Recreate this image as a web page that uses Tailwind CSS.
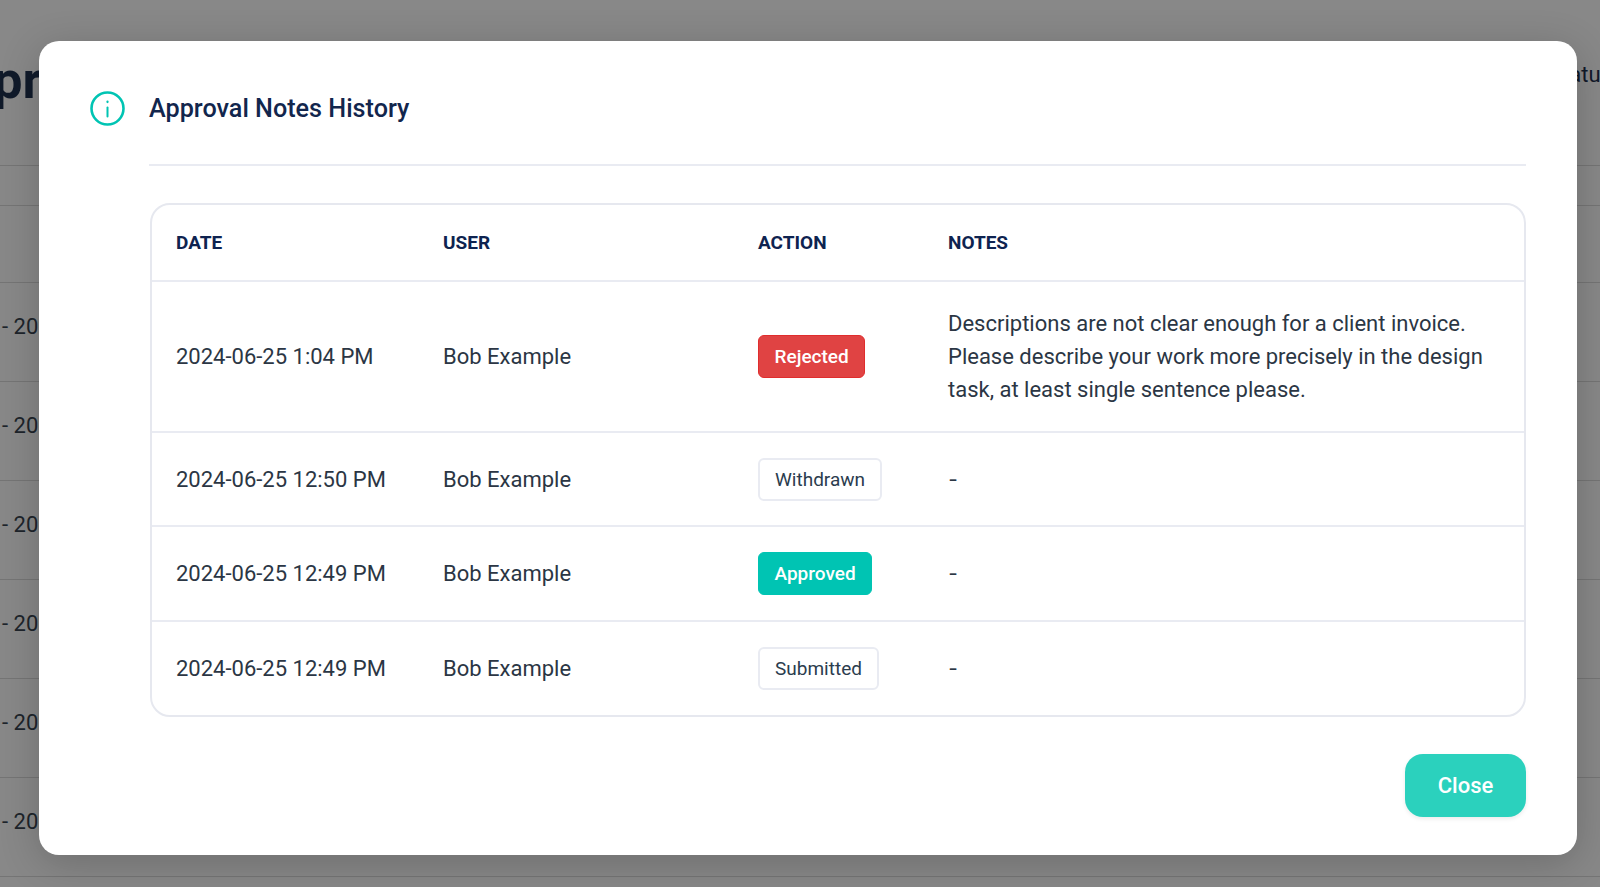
<!DOCTYPE html>
<html lang="en">
<head>
    <meta charset="UTF-8">
    <title>Approval Notes History</title>
    <script src="https://cdn.jsdelivr.net/npm/@tailwindcss/browser@4"></script>
</head>
<body>
    <div class="relative h-[887px] w-[1600px] overflow-hidden bg-white font-['Roboto',sans-serif] text-[#2b3644]">
        <!-- page behind the modal -->
        <div class="flex flex-col">
            <div class="flex h-[166px] items-center justify-between border-b border-[#d8d8d8]">
                <p class="ml-[-70px] mt-[-4px] text-[52px] leading-none font-bold text-[#0f2342]">Appr</p>
                <p class="mr-[-12px] mt-[-16px] text-[22px] text-[#0f2342]">Status</p>
            </div>
            <div class="h-[40px] border-b border-[#d8d8d8]"></div>
            <div class="h-[77px] border-b border-[#d8d8d8]"></div>
            <div class="flex h-[99px] items-center border-b border-[#d8d8d8] pb-[11px] text-[22px]"><span class="ml-[2px] whitespace-nowrap">- 2024</span></div>
            <div class="flex h-[99px] items-center border-b border-[#d8d8d8] pb-[11px] text-[22px]"><span class="ml-[2px] whitespace-nowrap">- 2024</span></div>
            <div class="flex h-[99px] items-center border-b border-[#d8d8d8] pb-[11px] text-[22px]"><span class="ml-[2px] whitespace-nowrap">- 2024</span></div>
            <div class="flex h-[99px] items-center border-b border-[#d8d8d8] pb-[11px] text-[22px]"><span class="ml-[2px] whitespace-nowrap">- 2024</span></div>
            <div class="flex h-[99px] items-center border-b border-[#d8d8d8] pb-[11px] text-[22px]"><span class="ml-[2px] whitespace-nowrap">- 2024</span></div>
            <div class="flex h-[99px] items-center border-b border-[#d8d8d8] pb-[11px] text-[22px]"><span class="ml-[2px] whitespace-nowrap">- 2024</span></div>
        </div>

        <!-- backdrop -->
        <div class="absolute inset-0 bg-[#111]/50"></div>

        <!-- modal -->
        <div class="absolute top-[41px] left-[39px] flex h-[814px] w-[1538px] rounded-[20px] bg-white pt-[32px] pr-[51px] pl-[51px] shadow-[0_8px_40px_rgba(0,0,0,0.2)]">
            <svg class="mt-[18px] h-[35px] w-[35px] shrink-0" viewBox="0 0 35 35" fill="none" stroke="#00c4b3" stroke-width="2.6" stroke-linecap="round">
                <circle cx="17.5" cy="17.5" r="16"/>
                <path d="M17.5 16.5v9" stroke-width="2"/>
                <path d="M17.5 10.5v.6" stroke-width="2.2"/>
            </svg>
            <div class="ml-[24px] flex flex-1 flex-col">
                <h2 class="flex h-[93px] items-center border-b-2 border-[#e9ebf2] pb-[19px] text-[25.2px] font-medium text-[#12264d]">Approval Notes History</h2>
                <div class="mt-[37px] ml-[1px] overflow-hidden rounded-[20px] border-2 border-[#e6e8ef]">
                    <table class="w-full table-fixed border-collapse text-left text-[22px] leading-[33px]">
                        <thead>
                            <tr class="h-[76px] text-[19px] font-bold text-[#0e2350]">
                                <th class="w-[291px] pl-[24px] font-bold">DATE</th>
                                <th class="w-[315px] font-bold">USER</th>
                                <th class="w-[190px] font-bold">ACTION</th>
                                <th class="font-bold">NOTES</th>
                            </tr>
                        </thead>
                        <tbody>
                            <tr class="h-[151px] border-t-2 border-[#e9ebf2]">
                                <td class="pl-[24px]">2024-06-25 1:04 PM</td>
                                <td>Bob Example</td>
                                <td><span class="inline-block rounded-[6px] border border-[#e02d2d] bg-[#e04343] px-[15.5px] py-[4px] align-middle text-[19px] font-medium text-white">Rejected</span></td>
                                <td class="pr-[24px]">Descriptions are not clear enough for a client invoice. Please describe your work more precisely in the design task, at least single sentence please.</td>
                            </tr>
                            <tr class="h-[94px] border-t-2 border-[#e9ebf2]">
                                <td class="pl-[24px]">2024-06-25 12:50 PM</td>
                                <td>Bob Example</td>
                                <td><span class="inline-block rounded-[6px] border-2 border-[#e9ebf2] bg-white px-[15px] py-[3px] align-middle text-[19px] text-[#2b3c4e]">Withdrawn</span></td>
                                <td><span class="ml-[2px] inline-block scale-x-125">-</span></td>
                            </tr>
                            <tr class="h-[95px] border-t-2 border-[#e9ebf2]">
                                <td class="pl-[24px]">2024-06-25 12:49 PM</td>
                                <td>Bob Example</td>
                                <td><span class="inline-block rounded-[6px] border border-[#00c4b3] bg-[#00c4b3] px-[15.5px] py-[4px] align-middle text-[19px] font-medium text-white">Approved</span></td>
                                <td><span class="ml-[2px] inline-block scale-x-125">-</span></td>
                            </tr>
                            <tr class="h-[94px] border-t-2 border-[#e9ebf2]">
                                <td class="pl-[24px]">2024-06-25 12:49 PM</td>
                                <td>Bob Example</td>
                                <td><span class="inline-block rounded-[6px] border-2 border-[#e9ebf2] bg-white px-[15px] py-[3px] align-middle text-[19px] text-[#2b3c4e]">Submitted</span></td>
                                <td><span class="ml-[2px] inline-block scale-x-125">-</span></td>
                            </tr>
                        </tbody>
                    </table>
                </div>
                <div class="mt-[37px] flex justify-end">
                    <button class="h-[63px] w-[121px] rounded-[18px] bg-[#2bd1bd] text-[22px] font-medium text-white shadow-[0_2px_4px_rgba(0,0,0,0.08)]">Close</button>
                </div>
            </div>
        </div>
    </div>
</body>
</html>
